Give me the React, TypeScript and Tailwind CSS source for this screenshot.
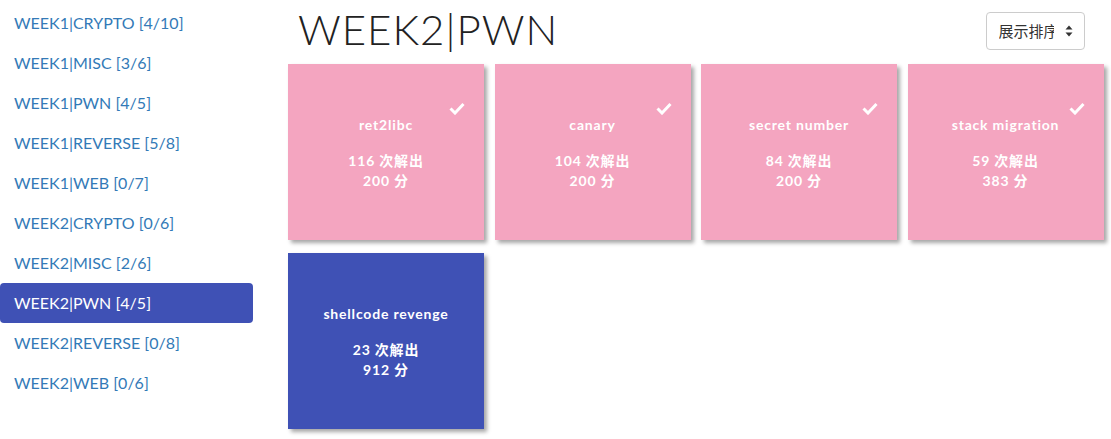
const categories = [
  { name: "WEEK1|CRYPTO", solved: 4, total: 10 },
  { name: "WEEK1|MISC", solved: 3, total: 6 },
  { name: "WEEK1|PWN", solved: 4, total: 5 },
  { name: "WEEK1|REVERSE", solved: 5, total: 8 },
  { name: "WEEK1|WEB", solved: 0, total: 7 },
  { name: "WEEK2|CRYPTO", solved: 0, total: 6 },
  { name: "WEEK2|MISC", solved: 2, total: 6 },
  { name: "WEEK2|PWN", solved: 4, total: 5, active: true },
  { name: "WEEK2|REVERSE", solved: 0, total: 8 },
  { name: "WEEK2|WEB", solved: 0, total: 6 },
];

const challenges = [
  { title: "ret2libc", solves: 116, score: 200, done: true },
  { title: "canary", solves: 104, score: 200, done: true },
  { title: "secret number", solves: 84, score: 200, done: true },
  { title: "stack migration", solves: 59, score: 383, done: true },
  { title: "shellcode revenge", solves: 23, score: 912, done: false },
];

function Check() {
  return (
    <svg width="16" height="13" viewBox="0 0 16 13" className="absolute right-[19px] top-[38px]">
      <path d="M1.5 6.5 L6 11 L14.5 2" fill="none" stroke="white" strokeWidth="3" />
    </svg>
  );
}

export default function App() {
  return (
    <div className="flex w-[1111px] h-[439px] bg-white overflow-hidden font-['Lato','Noto_Sans_CJK_SC',sans-serif]">
      {/* sidebar */}
      <nav className="w-[253px] shrink-0 pt-[3px] flex flex-col">
        {categories.map((c) => (
          <a
            key={c.name}
            className={
              c.active
                ? "h-10 flex items-center pl-[14px] text-[16px] rounded bg-[#3f51b5] text-white"
                : "h-10 flex items-center pl-[14px] text-[16px] text-[#337ab7]"
            }
          >
            {c.name} [{c.solved}/{c.total}]
          </a>
        ))}
      </nav>

      {/* main */}
      <main className="flex-1 pl-[35px] pr-[8px]">
        <div className="flex items-start justify-between h-[64px]">
          <h1 className="ml-[10px] mt-[5px] text-[42px] leading-[48px] font-light tracking-[1px] text-[#222]">
            WEEK2|PWN
          </h1>
          <button className="mt-[12px] mr-[19px] w-[99px] h-[38px] border border-[#ccc] rounded flex items-center pl-[12px] text-[15px] text-[#333] font-['Noto_Sans_CJK_SC',sans-serif] overflow-hidden whitespace-nowrap bg-white">
            <span className="w-[55px] overflow-hidden">展示排序</span>
            <svg width="8" height="12" viewBox="0 0 8 12" className="ml-[11px] shrink-0">
              <path d="M4 0.5 L7.5 4.5 H0.5 Z M4 11.5 L7.5 7.5 H0.5 Z" fill="#333" />
            </svg>
          </button>
        </div>
        <div className="grid grid-cols-[196px_196px_196px_196px] gap-x-[10.5px] gap-y-[13px]">
          {challenges.map((ch) => (
            <div
              key={ch.title}
              className={
                (ch.done ? "bg-[#f4a5c0] " : "bg-[#3f51b5] ") +
                "relative h-[176px] flex flex-col items-center justify-center text-white font-bold text-[14px] tracking-[0.8px] shadow-[3px_3px_4px_rgba(0,0,0,0.35)]"
              }
            >
              {ch.done && <Check />}
              <div className="mb-[16px]">{ch.title}</div>
              <div className="leading-[20px]">{ch.solves} 次解出</div>
              <div className="leading-[20px]">{ch.score} 分</div>
            </div>
          ))}
        </div>
      </main>
    </div>
  );
}
